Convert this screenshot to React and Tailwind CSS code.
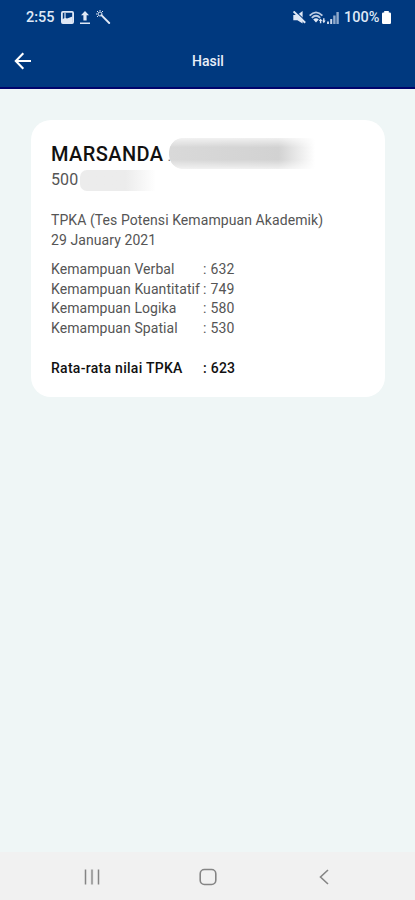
const scores = [
  { label: 'Kemampuan Verbal', value: 632 },
  { label: 'Kemampuan Kuantitatif', value: 749 },
  { label: 'Kemampuan Logika', value: 580 },
  { label: 'Kemampuan Spatial', value: 530 },
];

function StatusBar() {
  return (
    <div className="flex h-[34px] items-center pl-[26px] pr-[24px] text-[14.5px] text-[#dfe8f6]">
      <span className="w-[29px] whitespace-nowrap pt-px font-medium">2:55</span>

      {/* Screenshot saved */}
      <svg className="ml-[6px] h-[13px] w-[13px]" viewBox="0 0 13 13" fill="none">
        <rect x="0.9" y="0.9" width="11.2" height="11.2" rx="1" stroke="currentColor" strokeWidth="1.8" />
        <path d="M1 12V8.6l3-1.8 2 .8L11.5 5.6V12z" fill="currentColor" />
        <path d="M4 2v5" stroke="currentColor" strokeWidth="1.2" />
      </svg>

      {/* Upload */}
      <svg className="ml-[6px] h-[13px] w-[10px]" viewBox="0 0 10 13" fill="currentColor">
        <path d="M5 0l4 4.2H6.6V9.6H3.4V4.2H1zM0 11.4h10V13H0z" />
      </svg>

      {/* Magic wand */}
      <svg className="ml-[6px] h-[14px] w-[15px]" viewBox="0 0 15 14" fill="none" stroke="currentColor">
        <path d="M5.4 5.2l7.8 7.8" strokeWidth="1.9" strokeLinecap="round" />
        <circle cx="4" cy="4" r="2" strokeWidth="1" />
        <path d="M4 0v1.2M0 4h1.2M1 1l1 1M7 1L6 2M1 7l1-1" strokeWidth="1" />
      </svg>

      <div className="ml-auto flex items-center">
        {/* Muted */}
        <svg className="h-[13px] w-[13px]" viewBox="0 0 13 13" fill="none">
          <path d="M0.3 4h4L9.6 0v12.6L4.4 9.2H0.3z" fill="currentColor" />
          <path d="M1.6 -0.4L13.4 10.6" stroke="#00397f" strokeWidth="1.2" />
          <path d="M0.6 0.4l11.6 11.4" stroke="currentColor" strokeWidth="1.9" />
        </svg>

        {/* Wi-Fi */}
        <svg className="ml-[3px] h-[13px] w-[17px]" viewBox="0 0 17 13" fill="none">
          <path d="M0.6 4.6Q7-2 13.4 4.6M2.8 6.9Q7 2.6 11.2 6.9" stroke="currentColor" strokeWidth="1.8" opacity="0.85" />
          <path d="M4.2 8.6Q7 5.8 9.8 8.6L7 11.6z" fill="currentColor" />
          <path d="M11.6 12.2V8.6M14.8 7.3v4" stroke="currentColor" strokeWidth="1.4" />
          <path d="M9.8 10l1.8-2.6L13.2 10zM13.2 9.6l1.6 2.6 1.8-2.6z" fill="currentColor" />
        </svg>

        {/* Mobile signal */}
        <svg className="ml-[1px] h-[13px] w-[12px]" viewBox="0 0 12 13" fill="currentColor">
          <path d="M0 10.5h2V13H0zM3.2 8h2v5h-2z" opacity="0.9" />
          <path d="M6.2 4.5h2.4V13H6.2zM9.4 1h2.4v12H9.4z" opacity="0.65" />
        </svg>

        <span className="ml-[5px] w-[37px] whitespace-nowrap pt-px font-medium">100%</span>

        {/* Battery */}
        <svg className="ml-[1px] h-[13px] w-[9px]" viewBox="0 0 9 13" fill="#fff">
          <path d="M2.2 0h4.6v1.5h1A1.2 1.2 0 0 1 9 2.7v9.1A1.2 1.2 0 0 1 7.8 13H1.2A1.2 1.2 0 0 1 0 11.8V2.7a1.2 1.2 0 0 1 1.2-1.2h1z" />
        </svg>
      </div>
    </div>
  );
}

function Header() {
  return (
    <header className="h-[89px] border-b-2 border-[#00046c] bg-[#00397f]">
      <StatusBar />
      <div className="grid h-[54px] grid-cols-3 items-center px-[14px]">
        <svg className="h-[18px] w-[18px]" viewBox="0 0 18 18" fill="none" stroke="#fff" strokeWidth="2.1">
          <path d="M17 9H2M9.3 1.3L1.8 9l7.5 7.7" />
        </svg>
        <h1 className="pl-px pt-px text-center text-[14px] font-medium text-[#e8eef8]">Hasil</h1>
      </div>
    </header>
  );
}

function ScoreRow({ label, value }) {
  return (
    <div className="flex">
      <span className="w-[152px] whitespace-nowrap">{label}</span>
      <span className="tracking-[0.25px]">: {value}</span>
    </div>
  );
}

function ResultCard() {
  return (
    <section className="ml-[31px] mt-[31px] h-[277px] w-[354px] rounded-[20px] bg-white px-[20px] pt-[17px] text-[14px] leading-[19.7px] tracking-[0.08px] text-[#555]">
      <div className="flex h-[33px] items-center">
        <h2 className="w-[118px] whitespace-nowrap pt-[5px] text-[20px] font-medium tracking-[0.4px] text-[#111]">
          MARSANDA<span className="ml-[4px] text-[14px] font-normal text-[#777]">.</span>
        </h2>
        {/* Redacted surname */}
        <div className="h-[31px] w-[146px] rounded-l-[14px] bg-linear-to-r from-[#d9d9d9] via-[#d2d2d2] via-75% to-white mask-t-from-70% mask-t-to-115% mask-b-from-70% mask-b-to-115%" />
      </div>
      <div className="flex h-[20px] items-center">
        <span className="w-[29px] text-[16px]">500</span>
        {/* Redacted id digits */}
        <div className="h-[21px] w-[76px] rounded-l-[7px] bg-linear-to-r from-[#ececec] from-60% to-white" />
      </div>

      <div className="mt-[21px]">
        <p className="whitespace-nowrap">TPKA (Tes Potensi Kemampuan Akademik)</p>
        <p>29 January 2021</p>
      </div>

      <div className="mt-[9.5px]">
        {scores.map((s) => (
          <ScoreRow key={s.label} label={s.label} value={s.value} />
        ))}
      </div>

      <div className="mt-[20px] font-medium tracking-[0.28px] text-[#111]">
        <ScoreRow label="Rata-rata nilai TPKA" value={623} />
      </div>
    </section>
  );
}

function NavBar() {
  return (
    <nav className="flex h-[48px] items-center justify-between bg-[#f1f1f1] pl-[84px] pr-[83px] pt-px text-[#858585]">
      <svg className="h-[16px] w-[16px]" viewBox="0 0 16 16" fill="none" stroke="currentColor" strokeWidth="1.5">
        <path d="M1.5 0.5v15M14.5 0.5v15" />
        <path d="M8 0.5v15" strokeWidth="2.2" opacity="0.7" />
      </svg>
      <svg className="mr-[3px] h-[18px] w-[18px]" viewBox="0 0 18 18" fill="none" stroke="currentColor" strokeWidth="1.6">
        <rect x="1.2" y="1.5" width="15.6" height="15" rx="4.2" />
      </svg>
      <svg className="h-[16px] w-[14px]" viewBox="0 0 14 16" fill="none" stroke="currentColor" strokeWidth="1.6">
        <path d="M10 1L2.5 8l7.5 7" />
      </svg>
    </nav>
  );
}

export default function App() {
  return (
    <div className="flex h-[900px] w-[415px] flex-col overflow-hidden bg-[#eff6f6] font-['Roboto',sans-serif]">
      <Header />
      <main className="flex-1">
        <ResultCard />
      </main>
      <NavBar />
    </div>
  );
}
